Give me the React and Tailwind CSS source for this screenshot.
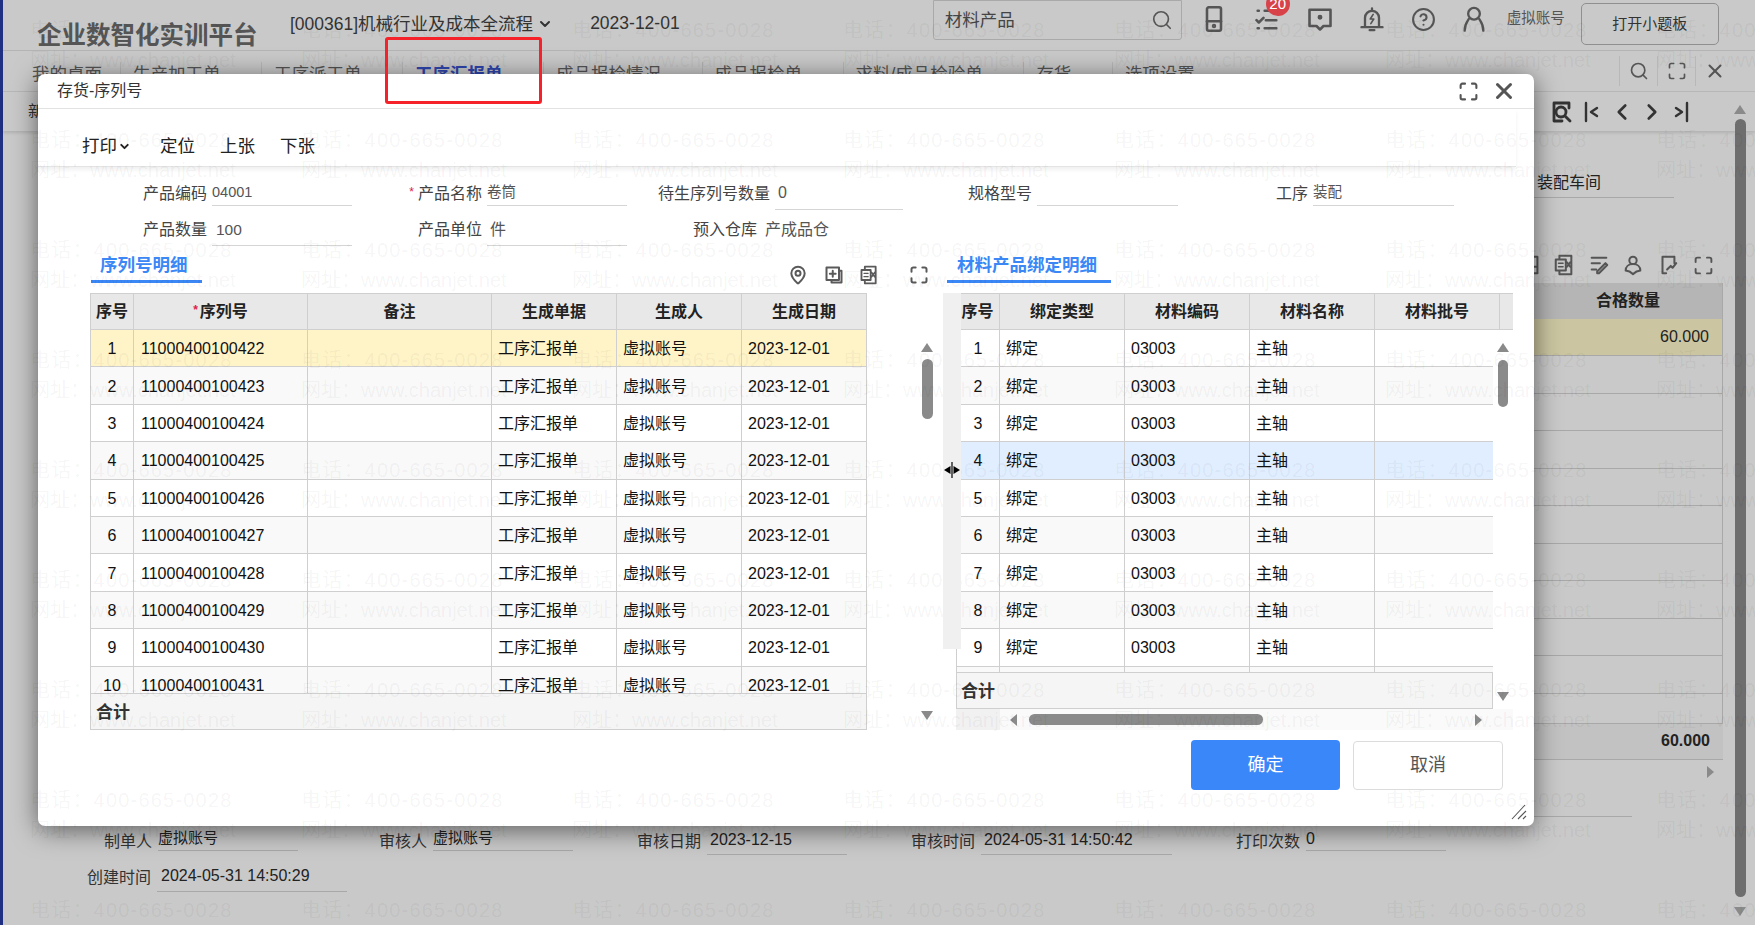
import { ChevronDown, ChevronLeft, ChevronRight, CircleHelp, MapPin, Maximize, Search, X } from 'lucide-react'

const FONT = "font-['Liberation_Sans','Noto_Sans_CJK_SC',sans-serif]"

const leftRows = Array.from({ length: 10 }, (_, i) => ({
  no: i + 1,
  serial: String(11000400100422 + i),
}))

// small hand drawn toolbar icons
function Glyph({ children, size = 24, className = '', stroke = 2 }) {
  return (
    <svg width={size} height={size} viewBox="0 0 24 24" fill="none" stroke="currentColor" strokeWidth={stroke} strokeLinecap="round" strokeLinejoin="round" className={className}>
      {children}
    </svg>
  )
}

function Tri({ dir, className = '' }) {
  const points = {
    up: '6,1 12,10 0,10',
    down: '0,1 12,1 6,10',
    left: '9,0 9,12 2,6',
    right: '2,0 2,12 9,6',
  }
  return (
    <svg width="12" height="12" viewBox="0 0 12 12" className={className}>
      <polygon points={points[dir]} fill="#8a8a8a" />
    </svg>
  )
}

function ExportDoc({ size = 20, stroke = 2.2 }) {
  return (
    <Glyph size={size} stroke={stroke}>
      <path d="M7 5V2h13v20H7v-3" />
      <path d="M3 6h11v12H3z" />
      <path d="M15 9l4 5M19 9l-4 5" />
      <path d="M6 10h5M6 14h5" strokeWidth="1.6" />
    </Glyph>
  )
}

function TopBar() {
  return (
    <div className="h-[51px] flex items-center border-b border-[#b4b4b4] relative">
      <div className="ml-[34px] mt-[22px] text-[24.5px] font-bold text-[#555] w-[253px] whitespace-nowrap">企业数智化实训平台</div>
      <div className="text-[17.5px] text-[#333] -mt-[2px] flex items-center whitespace-nowrap">
        [000361]机械行业及成本全流程
        <ChevronDown size={16} strokeWidth={3} className="ml-[4px]" />
      </div>
      <div className="ml-[37px] -mt-[4px] text-[17.5px] text-[#333]">2023-12-01</div>
      <div className="ml-[253px] -mt-[11px] w-[249px] h-[40px] border border-[#a9a9a9] rounded-b-[3px] flex items-center justify-between pl-[11px] pr-[8px] text-[17.5px] text-[#444]">
        <span className="mt-[2px]">材料产品</span>
        <Search size={22} strokeWidth={1.8} className="text-[#555]" />
      </div>
      <div className="flex items-center text-[#555] -mt-[12px]">
        <Glyph size={28} className="ml-[18px]" stroke={2.2}>
          <rect x="6" y="2" width="12" height="20" rx="1.5" />
          <path d="M6 14h12" />
          <circle cx="12" cy="18" r="0.8" />
        </Glyph>
        <div className="ml-[25px] relative">
          <Glyph size={28} stroke={2.2}>
            <path d="M4 5h1M10 5h10M3 13l2 2 4-4M11 13h9M4 20h1M10 20h10" />
          </Glyph>
          <span className="absolute -top-[13px] left-[13px] w-[24px] h-[24px] rounded-full bg-[#d8434a] text-white text-[15px] flex items-center justify-center">20</span>
        </div>
        <Glyph size={28} className="ml-[25px]" stroke={2.2}>
          <path d="M3 4h18v14h-6l-3 3-3-3H3z" />
          <circle cx="12" cy="10.5" r="1" fill="currentColor" />
        </Glyph>
        <Glyph size={28} className="ml-[24px]" stroke={2}>
          <path d="M3 19h18M6 19v-8a6 6 0 0 1 12 0v8M10 21.5h4M12 3v2" />
          <path d="M13 8l-2.5 4h3L11 16" strokeWidth="1.4" />
        </Glyph>
        <CircleHelp size={25} strokeWidth={2} className="ml-[25px]" />
        <Glyph size={28} className="ml-[24px]" stroke={2}>
          <circle cx="12" cy="7.5" r="5" />
          <path d="M4 22c0-6 3-9 3.5-10M20 22c0-6-3-9-3.5-10" />
        </Glyph>
      </div>
      <div className="ml-[19px] -mt-[12px] text-[14.5px] text-[#555] whitespace-nowrap">虚拟账号</div>
      <div className="ml-[16px] -mt-[2px] w-[138px] h-[42px] border border-[#8f8f8f] rounded-[5px] flex items-center justify-center text-[15px] text-[#333]">打开小题板</div>
    </div>
  )
}

const tabs = ['我的桌面', '生产加工单', '工序派工单', '工序汇报单', '成品报检情况', '成品报检单', '求料/成品检验单', '存货', '选项设置']

function TabBar() {
  return (
    <div className="h-[41px] flex items-center border-b border-[#b8b8b8]">
      <div className="flex items-center mt-[7px] pl-[16px] text-[17.5px] text-[#555] whitespace-nowrap">
        {tabs.map((t, i) => (
          <div key={t} className={i === 0 ? 'pl-[13px] pr-[18px] h-[26px] flex items-center border-r border-[#b8b8b8]' : 'pl-[12px] pr-[40.5px] h-[26px] flex items-center border-r border-[#b8b8b8] last:border-r-0'}>
            {i === 3 ? <span className="font-bold text-[#2f45ad]">{t}</span> : t}
          </div>
        ))}
      </div>
      <div className="ml-auto mr-[22px] flex items-center text-[#555]">
        <div className="w-[38px] h-[30px] border-l border-[#b8b8b8] flex items-center justify-center"><Search size={20} strokeWidth={2} /></div>
        <div className="w-[38px] h-[30px] border-l border-[#b8b8b8] flex items-center justify-center"><Maximize size={20} strokeWidth={2} /></div>
        <div className="w-[38px] h-[30px] border-l border-[#b8b8b8] flex items-center justify-center"><X size={22} strokeWidth={2.2} /></div>
      </div>
    </div>
  )
}

function PageToolbar() {
  return (
    <div className="h-[39px] flex items-center pl-[25px] text-[16px] text-[#333] shadow-[0_2px_3px_rgba(0,0,0,0.12)]">
      新
      <div className="ml-auto mr-[62px] flex items-center text-[#333]">
        <Glyph stroke={2.8} size={24}>
          <path d="M20 8V3H5v18h8" />
          <circle cx="12" cy="12" r="5" />
          <path d="M16 16l5 5" />
        </Glyph>
        <Glyph stroke={2.4} size={24} className="ml-[7px]"><path d="M6 3v18M17 8l-6 4 6 4" /></Glyph>
        <ChevronLeft size={26} strokeWidth={2.4} className="ml-[5px]" />
        <ChevronRight size={26} strokeWidth={2.4} className="ml-[4px]" />
        <Glyph stroke={2.4} size={24} className="ml-[4px]"><path d="M18 3v18M7 8l6 4-6 4" /></Glyph>
      </div>
    </div>
  )
}

function BottomField({ label, value, labelW, valueW, valueClass = '', labelPt = 'pt-[9px]' }) {
  return (
    <div className="flex items-start">
      <div className={labelW + ' text-right text-[16px] text-[#333] whitespace-nowrap ' + labelPt}>{label}</div>
      <div className={valueW + ' ml-[6px] h-[30px] border-b border-[#a8a8a8] text-[#222] whitespace-nowrap ' + valueClass}>{value}</div>
    </div>
  )
}

function PageBody() {
  return (
    <div className="flex-1 flex min-h-0">
      <div className="flex-1 flex flex-col min-w-0">
        <div className="self-end w-[196px] h-[695px]">
          <div className="h-[67px] w-[140px] flex items-end border-b border-[#a8a8a8] pb-[2px] text-[16px] text-[#222] pl-[3px]">装配车间</div>
          <div className="flex items-center h-[85px] pt-[49px] text-[#555]">
            <Glyph size={22} stroke={2.2} className="-ml-[14px]"><path d="M5 3h14v18H5zM5 14h14" /></Glyph>
            <span className="ml-[11px] flex"><ExportDoc size={22} /></span>
            <Glyph size={22} stroke={2.2} className="ml-[13px]"><path d="M4 4h16M4 10h9M4 17h5M10 19l9-9 2 2-9 9h-2z" /></Glyph>
            <Glyph size={22} stroke={2.2} className="ml-[12px]"><circle cx="12" cy="7" r="4" /><path d="M4 18c0-4 3-7 8-7s8 3 8 7l-4 1-4 3-4-3z" /></Glyph>
            <Glyph size={22} stroke={2.2} className="ml-[13px]"><path d="M19 10V3H6v18h4M11 17l4-4 2 2 4-5" /></Glyph>
            <Maximize size={21} strokeWidth={2.2} className="ml-[14px]" />
          </div>
          <div className="w-[189px] border-r border-[#a8a8a8] text-[16px] text-[#222]">
            <div className="h-[36px] bg-[#b5b5b5] flex items-center justify-center font-bold">合格数量</div>
            <div className="h-[37px] bg-[#cbc6a1] flex items-center justify-end pr-[13px] border-b border-[#a8a8a8]">60.000</div>
            {[0, 1, 2, 3, 4, 5, 6, 7, 8].map((i) => (
              <div key={i} className="h-[37.5px] border-b border-[#a8a8a8]" />
            ))}
            <div className="h-[30px] border-b border-[#a8a8a8] -mr-px" />
            <div className="h-[36px] bg-[#c2c2c2] flex items-center justify-end pr-[13px] font-bold border-b border-[#a8a8a8] -mr-px">60.000</div>
          </div>
          <div className="w-[183px] flex justify-end pt-[6px]"><Tri dir="right" /></div>
          <div className="w-[98px] h-[39px] border-b border-[#a8a8a8]" />
        </div>
        <div className="flex flex-col gap-[7px] -mt-[5px]">
          <div className="flex pl-[1px]">
            <BottomField label="制单人" value="虚拟账号" labelW="w-[148px]" valueW="w-[140px]" valueClass="text-[15px] pt-[6px]" />
            <BottomField label="审核人" value="虚拟账号" labelW="w-[129px]" valueW="w-[140px]" valueClass="text-[15px] pt-[6px]" />
            <BottomField label="审核日期" value="2023-12-15" labelW="w-[128px]" valueW="w-[140px] mt-[4px]" valueClass="text-[16px] pl-[3px] pt-[3px]" />
            <BottomField label="审核时间" value="2024-05-31 14:50:42" labelW="w-[128px]" valueW="w-[191px] mt-[4px]" valueClass="text-[16px] pl-[3px] pt-[3px]" />
            <BottomField label="打印次数" value="0" labelW="w-[128px]" valueW="w-[140px]" valueClass="text-[16px] pt-[6px]" />
          </div>
          <div className="flex pl-[1px]">
            <BottomField label="创建时间" value="2024-05-31 14:50:29" labelW="w-[147px]" labelPt="pt-[4px]" valueW="w-[190px]" valueClass="text-[16px] pl-[4px] pt-[2px]" />
          </div>
        </div>
      </div>
      <div className="w-[20px] flex flex-col items-center relative mr-[5px]">
        <Tri dir="up" className="-mt-[27px]" />
        <div className="mt-[3px] w-[11px] h-[778px] rounded-full bg-[#6e6e6e]" />
        <Tri dir="down" className="mt-[9px]" />
      </div>
    </div>
  )
}

function Field({ label, children, required, extra = '', pad = 'pb-0' }) {
  return (
    <>
      <div className={'flex items-end justify-end text-[16px] text-[#444] whitespace-nowrap ' + pad}>
        {required && <span className="text-[#e0204a] text-[12px] mr-[4px] self-center">*</span>}
        {label}
      </div>
      <div className={'ml-[5px] border-b border-[#d5d5d5] flex items-end whitespace-nowrap text-[#555] ' + extra}>{children}</div>
    </>
  )
}

function Fields() {
  return (
    <div className="mt-[10px] grid grid-cols-[169px_145px_130px_145px_143px_133px_129px_146px_130px_146px] grid-rows-[29px_31px] gap-y-[9px]">
      <Field label="产品编码" extra="text-[14.5px] pb-[1px]">04001</Field>
      <Field label="产品名称" required extra="text-[14.5px] pb-[1px]">卷筒</Field>
      <Field label="待生序列号数量" extra="text-[16px] mb-[-4px] pl-[3px] pb-[4px]">0</Field>
      <Field label="规格型号" />
      <Field label="工序" extra="text-[14.5px] pb-[1px]">装配</Field>
      <Field label="产品数量" pad="pb-[4px]" extra="text-[15.5px] pl-[4px] pb-[4px]">100</Field>
      <Field label="产品单位" pad="pb-[4px]" extra="text-[16px] pl-[3px] pb-[3px]">件</Field>
      <div className="col-span-2 flex items-end pb-[4px] text-[16px] whitespace-nowrap">
        <span className="w-[130px] text-right text-[#444]">预入仓库</span>
        <span className="ml-[8px] text-[#555]">产成品仓</span>
      </div>
      <div className="col-span-4" />
    </div>
  )
}

function GridTabs() {
  return (
    <div className="mt-[9px] h-[28px] flex items-center pl-[53px] text-[#5a5a5a]">
      <div className="w-[111px] h-[28px] pl-[9px] pb-[4px] border-b-[3px] border-[#3a87f5] text-[17.5px] font-bold text-[#3a87f5] flex items-center whitespace-nowrap">序列号明细</div>
      <div className="flex items-center self-end -mb-[2px] ml-[586px]">
        <MapPin size={20} strokeWidth={2.4} />
        <Glyph size={20} stroke={2.4} className="ml-[16px]"><path d="M19 7h2v14H9v-2" /><path d="M3 3h15v15H3z" /><path d="M10.5 7v7M7 10.5h7" /></Glyph>
        <span className="ml-[15px] flex"><ExportDoc /></span>
        <Maximize size={20} strokeWidth={2.4} className="ml-[30px]" />
      </div>
      <div className="ml-[18px] w-[164px] h-[28px] pl-[10px] pb-[4px] border-b-[3px] border-[#3a87f5] text-[17.5px] font-bold text-[#3a87f5] flex items-center whitespace-nowrap">材料产品绑定明细</div>
    </div>
  )
}

const leftHead = ['序号', '序列号', '备注', '生成单据', '生成人', '生成日期']

function LeftGrid() {
  return (
    <div className="w-[777px] h-[437px] flex flex-col border-x border-[#cfcfcf] text-[16px] text-[#111]">
      <div className="h-[37px] shrink-0 grid grid-cols-[43px_174px_184px_125px_125px_124px] bg-[#e8e8e8] border-y border-[#cfcfcf] font-bold text-[#222]">
        {leftHead.map((h, i) => (
          <div key={h} className="flex items-center justify-center border-r border-[#cfcfcf] last:border-r-0">
            {i === 1 && <span className="text-[#e0204a] text-[12px] mr-[2px] -mt-[4px]">*</span>}
            {h}
          </div>
        ))}
      </div>
      <div className="h-[363px] shrink-0 overflow-hidden">
        {leftRows.map((r) => (
          <div
            key={r.no}
            className={
              'h-[37.4px] grid grid-cols-[43px_174px_184px_125px_125px_124px] items-stretch border-b border-[#cfcfcf] ' +
              (r.no === 1 ? 'bg-[#fff4c8]' : r.no % 2 === 0 ? 'bg-[#f9f9f9]' : 'bg-white')
            }
          >
            <div className="flex items-center justify-center pt-[2px] border-r border-[#cfcfcf]">{r.no}</div>
            <div className="flex items-center pl-[7px] pt-[2px] border-r border-[#cfcfcf]">{r.serial}</div>
            <div className="border-r border-[#cfcfcf]" />
            <div className="flex items-center pl-[6px] pt-[2px] border-r border-[#cfcfcf]">工序汇报单</div>
            <div className="flex items-center pl-[6px] pt-[2px] border-r border-[#cfcfcf]">虚拟账号</div>
            <div className="flex items-center pl-[6px] pt-[2px]">2023-12-01</div>
          </div>
        ))}
      </div>
      <div className="h-[37px] shrink-0 bg-[#f5f5f5] border-y border-[#cfcfcf] flex items-center pl-[5px] pt-[2px] text-[17px] font-bold text-[#333]">合计</div>
    </div>
  )
}

const rightHead = ['序号', '绑定类型', '材料编码', '材料名称', '材料批号']

function RightGrid() {
  return (
    <div className="-ml-[5px] w-[557px] h-[437px] flex flex-col text-[16px] text-[#111]">
      <div className="h-[37px] shrink-0 grid grid-cols-[44px_125px_125px_125px_125px_13px] bg-[#e8e8e8] border-y border-[#cfcfcf] font-bold text-[#222]">
        {rightHead.map((h) => (
          <div key={h} className="flex items-center justify-center border-r border-[#cfcfcf]">{h}</div>
        ))}
        <div />
      </div>
      <div className="flex flex-1 min-h-0">
        <div className="w-[537px] flex flex-col">
          <div className="h-[342px] shrink-0 overflow-hidden border-l border-[#cfcfcf]">
            {leftRows.map((r) => (
              <div
                key={r.no}
                className={
                  'h-[37.4px] grid grid-cols-[43px_125px_125px_125px_119px] items-stretch border-b border-[#cfcfcf] ' +
                  (r.no === 4 ? 'bg-[#e1eeff]' : r.no % 2 === 0 ? 'bg-[#f9f9f9]' : 'bg-white')
                }
              >
                <div className="flex items-center justify-center pt-[2px] border-r border-[#cfcfcf]">{r.no}</div>
                <div className="flex items-center pl-[6px] pt-[2px] border-r border-[#cfcfcf]">绑定</div>
                <div className="flex items-center pl-[6px] pt-[2px] border-r border-[#cfcfcf]">03003</div>
                <div className="flex items-center pl-[6px] pt-[2px] border-r border-[#cfcfcf]">主轴</div>
                <div />
              </div>
            ))}
          </div>
          <div className="h-[37px] shrink-0 bg-[#f5f5f5] border border-[#cfcfcf] flex items-center pl-[4px] pt-[2px] text-[17px] font-bold text-[#333]">合计</div>
        </div>
        <div className="w-[20px] flex flex-col items-center pt-[12px]">
          <Tri dir="up" />
          <div className="mt-[6px] w-[10px] h-[47px] rounded-full bg-[#8a8a8a]" />
          <Tri dir="down" className="mt-[284px]" />
        </div>
      </div>
      <div className="h-[21px] shrink-0 flex items-center bg-[#fafafa]">
        <div className="w-[44px] h-[21px] bg-[#f1f1f1]" />
        <Tri dir="left" className="ml-[8px]" />
        <div className="ml-[9px] w-[234px] h-[11px] rounded-full bg-[#8a8a8a]" />
        <Tri dir="right" className="ml-[210px]" />
      </div>
    </div>
  )
}

function Modal() {
  return (
    <div className="absolute left-[38px] top-[74px] w-[1496px] h-[752px] bg-white rounded-[7px] shadow-[0_4px_26px_rgba(0,0,0,0.55)] flex flex-col">
      <div className="h-[35px] shrink-0 flex items-center pl-[19px] pr-[17px] border-b border-[#e2e2e2] text-[16px] text-[#333]">
        存货-序列号
        <Maximize size={21} strokeWidth={2.4} className="ml-auto text-[#555]" />
        <X size={26} strokeWidth={2.8} className="ml-[12px] text-[#555]" />
      </div>
      <div className="h-[58px] shrink-0 flex items-center pl-[44px] mr-[18px] border-b border-[#e4e4e4] shadow-[0_3px_4px_rgba(0,0,0,0.06)] text-[17.5px] text-[#222] pt-[18px]">
        <span className="flex items-center">打印<ChevronDown size={13} strokeWidth={3.5} className="ml-[1px]" /></span>
        <span className="ml-[29px]">定位</span>
        <span className="ml-[25px]">上张</span>
        <span className="ml-[25px]">下张</span>
      </div>
      <Fields />
      <GridTabs />
      <div className="mt-[10px] pl-[52px] flex items-start">
        <LeftGrid />
        <div className="w-[76px] h-[437px] flex flex-col items-center pt-[49px] pl-[44px]">
          <Tri dir="up" />
          <div className="mt-[5px] w-[11px] h-[60px] rounded-full bg-[#8a8a8a]" />
          <Tri dir="down" className="mt-[291px]" />
        </div>
        <div className="relative z-10 w-[18px] h-[356px] bg-[#f0f0f0] flex items-center justify-center text-black">
          <svg width="18" height="18" viewBox="0 0 18 18" className="-mt-[2px]">
            <path d="M9 1v16" stroke="currentColor" strokeWidth="1.2" />
            <polygon points="7.5,5 7.5,13 1,9" fill="currentColor" />
            <polygon points="10.5,5 10.5,13 17,9" fill="currentColor" />
          </svg>
        </div>
        <RightGrid />
      </div>
      <div className="mt-[10px] pr-[31px] flex justify-end items-start text-[18px]">
        <div className="w-[149px] h-[50px] rounded-[4px] bg-[#3a87fa] text-white flex items-center justify-center">确定</div>
        <div className="ml-[13px] mt-[1px] w-[150px] h-[49px] rounded-[4px] border border-[#dcdcdc] text-[#555] flex items-center justify-center">取消</div>
      </div>
      <svg width="18" height="18" viewBox="0 0 18 18" className="absolute right-[6px] bottom-[5px] text-[#555]">
        <path d="M2 16L15 2M8 16L16 8M13 16l3-3" stroke="currentColor" strokeWidth="1.1" />
      </svg>
    </div>
  )
}

// repeated watermark, lies over the whole page
function Watermark() {
  const cells = Array.from({ length: 63 }, (_, i) => i)
  return (
    <div className="absolute inset-0 overflow-hidden pointer-events-none grid grid-cols-[repeat(7,271px)] auto-rows-[110px] text-black/[0.05] text-[20px] whitespace-nowrap">
      {cells.map((i) => (
        <div key={i} className="pl-[30px] pt-[15px]">
          <div className="h-[30px] flex items-center tracking-[1.2px]">电话：400-665-0028</div>
          <div className="h-[30px] flex items-center">网址：www.chanjet.net</div>
        </div>
      ))}
    </div>
  )
}

export default function App() {
  return (
    <div className={FONT + ' relative w-screen h-screen overflow-hidden bg-[#c9c9c9] flex'}>
      <div className="w-[3px] shrink-0 bg-[#1f2f82]" />
      <div className="flex-1 flex flex-col min-w-0">
        <TopBar />
        <TabBar />
        <PageToolbar />
        <PageBody />
      </div>
      <Modal />
      {/* red annotation box drawn on the screenshot */}
      <div className="absolute left-[385px] top-[37px] w-[157px] h-[67px] border-[3px] border-[#f5222a] rounded-[3px] pointer-events-none" />
      <Watermark />
    </div>
  )
}
